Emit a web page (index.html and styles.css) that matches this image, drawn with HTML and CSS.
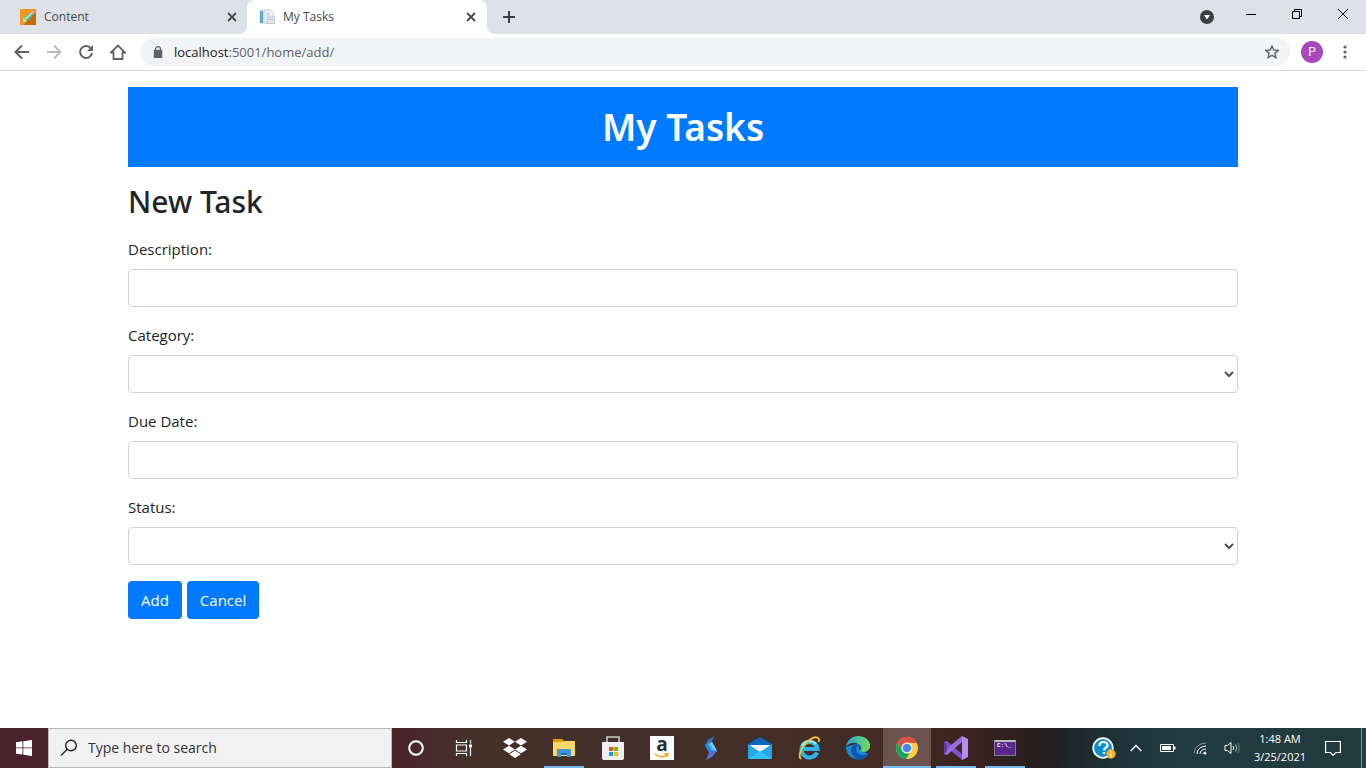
FILE: index.html
```html
<!DOCTYPE html>
<html lang="en">
<head>
<meta charset="utf-8">
<meta name="viewport" content="width=device-width, initial-scale=1">
<title>My Tasks</title>
<link rel="stylesheet" href="styles.css">
</head>
<body>
<div class="tab-strip">
  <div class="tab">
    <svg class="favicon" width="16" height="16" viewBox="0 0 16 16"><rect width="16" height="16" fill="#f7941d"/><path d="M16 3v13H3z" fill="#c46c00"/><path d="M2.500 13.500l1.300-4.200 7.400-6.500 2.300 2.400-7 7.200z" fill="#45bfa6"/><path d="M4.500 9.800l7-6.400 1 1-6.800 6.600z" fill="#a5f0df"/><path d="M11 3l1-1q2-.5 2.500 2l-1 1.300z" fill="#ef9bc8"/><path d="M2.500 13.500l1.200-4 2.800 2.800z" fill="#fce5b4"/></svg>
    <span class="tab-title">Content</span>
    <button class="tab-close" aria-label="Close Content"><svg width="10" height="10" viewBox="0 0 10 10"><path d="M1 1l8 8M9 1L1 9" stroke="#45494d" stroke-width="1.800"/></svg></button>
  </div>
  <div class="tab tab-active">
    <svg class="favicon" width="16" height="16" viewBox="0 0 16 16"><path d="M1 1h10v13H1z" fill="#e9eef3" stroke="#c6ced5" stroke-width=".7"/><path d="M1 2h3v12H1z" fill="#5fa6d8"/><path d="M5 1h6l3 3v10H5z" fill="#f5f7f9" stroke="#bcc5cc" stroke-width=".8"/><path d="M8 8h7.500v6.500H8z" fill="#e4e9ed" stroke="#b4bdc4" stroke-width=".8"/><path d="M9 10.500h5M7 4h4M7 6h4" stroke="#aeb9c2" stroke-width=".8"/></svg>
    <span class="tab-title">My Tasks</span>
    <button class="tab-close" aria-label="Close My Tasks"><svg width="10" height="10" viewBox="0 0 10 10"><path d="M1 1l8 8M9 1L1 9" stroke="#45494d" stroke-width="1.800"/></svg></button>
  </div>
  <button class="new-tab" aria-label="New tab"><svg width="12" height="12" viewBox="0 0 12 12"><path d="M6 0v12M0 6h12" stroke="#3c4043" stroke-width="2"/></svg></button>
  <div class="window-controls">
    <button class="tab-search" aria-label="Search tabs"><svg width="14" height="14" viewBox="0 0 14 14"><circle cx="7" cy="7" r="7" fill="#3c4043"/><path d="M4 5h6L7 9.500z" fill="#fff"/></svg></button>
    <button class="window-button" aria-label="Minimize"><svg width="10" height="10" viewBox="0 0 10 10"><path d="M0 5.500h10" stroke="#000"/></svg></button>
    <button class="window-button" aria-label="Restore"><svg width="10" height="10" viewBox="0 0 10 10"><path d="M.5 2.500h7v7h-7zM2.500 2.500v-2h7v7h-2" fill="none" stroke="#000"/></svg></button>
    <button class="window-button" aria-label="Close"><svg width="10" height="10" viewBox="0 0 10 10"><path d="M0 0l10 10M10 0L0 10" stroke="#000"/></svg></button>
  </div>
</div>
<div class="toolbar">
  <button class="nav-button" aria-label="Back"><svg width="16" height="16" viewBox="0 0 16 16"><path d="M15 8H2M8 1.500L1.500 8 8 14.500" fill="none" stroke="#5f6368" stroke-width="2"/></svg></button>
  <button class="nav-button" aria-label="Forward"><svg width="16" height="16" viewBox="0 0 16 16"><path d="M1 8h13M8 1.500L14.500 8 8 14.500" fill="none" stroke="#babcbe" stroke-width="2"/></svg></button>
  <button class="nav-button" aria-label="Reload"><svg width="16" height="16" viewBox="0 0 16 16"><path d="M13 4.500A6 6 0 1 0 14 9" fill="none" stroke="#5f6368" stroke-width="2"/><path d="M15 1v6H9z" fill="#5f6368"/></svg></button>
  <button class="nav-button" aria-label="Home"><svg width="16" height="16" viewBox="0 0 16 16"><path d="M1 8.500L8 1.500l7 7h-2.500V15h-9V8.500z" fill="none" stroke="#5f6368" stroke-width="1.800"/></svg></button>
  <div class="address-bar">
    <svg width="10" height="12" viewBox="0 0 10 12"><path d="M1 4h8v8H1z" fill="#5f6368" stroke="#5f6368" stroke-width=".5"/><path d="M2.500 5V3a2.500 2.300 0 0 1 5 0v2" fill="none" stroke="#5f6368" stroke-width="1.200"/></svg>
    <a class="address" href="#"><span class="address-host">localhost</span>:5001/home/add/</a>
    <button class="bookmark" aria-label="Bookmark this page"><svg width="14" height="14" viewBox="0 0 14 14"><path d="M7 1l1.800 4 4.400.4-3.300 2.900 1 4.300L7 10.300l-3.900 2.300 1-4.300L.8 5.400 5.200 5z" fill="none" stroke="#5f6368" stroke-width="1.400"/></svg></button>
  </div>
  <button class="profile">P</button>
  <button class="nav-button menu-button" aria-label="Menu"><svg width="4" height="14" viewBox="0 0 4 14" fill="#5f6368"><circle cx="2" cy="2" r="1.600"/><circle cx="2" cy="7" r="1.600"/><circle cx="2" cy="12" r="1.600"/></svg></button>
</div>
<main class="page">
  <header class="banner"><h1>My Tasks</h1></header>
  <h2>New Task</h2>
  <form>
    <div class="field"><label for="description">Description:</label><input class="control" id="description" type="text"></div>
    <div class="field"><label for="category">Category:</label><select class="control" id="category"><option></option></select></div>
    <div class="field"><label for="due">Due Date:</label><input class="control" id="due" type="text"></div>
    <div class="field"><label for="status">Status:</label><select class="control" id="status"><option></option></select></div>
    <div class="actions"><button class="btn" type="submit">Add</button><a class="btn" href="#">Cancel</a></div>
  </form>
</main>
<footer class="taskbar">
  <button class="task" aria-label="Start"><svg width="16" height="16" viewBox="0 0 16 16" fill="#fff"><path d="M0 2.200l6.500-.9v6.200H0zM7.300 1.200L16 0v7.500H7.300zM0 8.300h6.500v6.300L0 13.700zM7.300 8.300H16V16l-8.700-1.200z"/></svg></button>
  <div class="search">
    <svg width="18" height="18" viewBox="0 0 18 18"><circle cx="11" cy="6.500" r="5.300" fill="none" stroke="#222" stroke-width="1.400"/><path d="M7.200 10.300L1 16.500" stroke="#222" stroke-width="1.400"/></svg>
    <input type="text" aria-label="Search" placeholder="Type here to search">
  </div>
  <button class="task" aria-label="Cortana"><svg width="16" height="16" viewBox="0 0 16 16"><circle cx="8" cy="8" r="6.800" fill="none" stroke="#fff" stroke-width="2"/></svg></button>
  <button class="task" aria-label="Task view"><svg width="18" height="16" viewBox="0 0 18 16"><path d="M1.500 0v2.500h10V0M1.500 16v-2.500h10V16M1.500 5h10v6h-10zM15.500 0v3.500M15.500 8v8" fill="none" stroke="#fff" stroke-width="1.200"/><path d="M14 4.500h3v3h-3z" fill="#fff"/></svg></button>
  <div class="apps">
    <button class="task" aria-label="Dropbox"><svg width="24" height="20" viewBox="0 0 24 20" fill="#fff"><path d="M6 0l6 3.800-6 3.800-6-3.800zM18 0l6 3.800-6 3.800-6-3.800zM6 7.700l6 3.800-6 3.800-6-3.800zM18 7.700l6 3.800-6 3.800-6-3.800zM12 12.600l5.700 3.700L12 20l-5.700-3.700z"/></svg></button>
    <button class="task task-open" aria-label="File Explorer"><svg width="22" height="18" viewBox="0 0 22 18"><path d="M0 0h9l2 2h11v15H0z" fill="#e0990c"/><path d="M0 3h9l2-1h11v15H0z" fill="#ffd766"/><path d="M4 10h14v8h-4v-4H8v4H4z" fill="#3b96db"/><path d="M8 14h6v2H8z" fill="#236ab0"/></svg></button>
    <button class="task" aria-label="Store"><svg width="24" height="24" viewBox="0 0 24 24"><path d="M6 7V1h12v6" fill="none" stroke="#ccc" stroke-width="1.600"/><path d="M1 6h22v16q0 2-2 2H3q-2 0-2-2z" fill="#f1f1f1"/><path d="M8 11h4v4H8z" fill="#f04e23"/><path d="M13 11h4v4h-4z" fill="#7fba00"/><path d="M8 16h4v4H8z" fill="#00a4ef"/><path d="M13 16h4v4h-4z" fill="#ffb900"/></svg></button>
    <button class="task" aria-label="Amazon"><span class="amazon">a<svg width="14" height="5" viewBox="0 0 14 5"><path d="M0 1q6 5 12 1M9.500 1l3.500-.3-1 3" fill="none" stroke="#ff9900" stroke-width="1.300"/></svg></span></button>
    <button class="task" aria-label="Streams"><svg width="14" height="24" viewBox="0 0 14 24"><path d="M11 0L4 4 1 10l3 1 3-5z" fill="#2b78dc"/><path d="M1 9l7-3 5 9-7 3z" fill="#42b5f5"/><path d="M6 7l2-1 5 9-2 1z" fill="#6dd3fa"/><path d="M1 9l3-1 5 9-3 1z" fill="#2686e8"/><path d="M10 14l3 1-5 6-6 3 3-7z" fill="#5871d4"/></svg></button>
    <button class="task" aria-label="Mail"><svg width="24" height="22" viewBox="0 0 24 22"><path d="M12 0l12 7v5H0V7z" fill="#0b66bd"/><path d="M2 8h20v10H2z" fill="#f4f5f8"/><path d="M0 7l12 8 12-8v15H0z" fill="#25a6e9"/><path d="M0 22l12-8 12 8z" fill="#36c1f5"/></svg></button>
    <button class="task" aria-label="Internet Explorer"><svg width="24" height="24" viewBox="0 0 24 24"><path d="M20 16.500A8 7.800 0 1 1 20.500 13H7" fill="none" stroke="#2cb5ee" stroke-width="4.200"/><path d="M5 10a8 7 0 0 1 14-2" fill="none" stroke="#a5eafe" stroke-width="2"/><path d="M4 23C-2 18 13-1 20 1.500q3 1 1.500 4.500" fill="none" stroke="#f9c51d" stroke-width="1.800"/></svg></button>
    <button class="task" aria-label="Edge"><svg width="24" height="24" viewBox="0 0 24 24"><defs><linearGradient id="edge-top"><stop stop-color="#20a6dc"/><stop offset="1" stop-color="#72dd5c"/></linearGradient></defs><path d="M0 11a12 12 0 0 0 22 7l-9-5V7z" fill="#168bd5"/><path d="M0 11C1 4 6 0 12 0c8 0 13 6 12 11-1 5-7 6-10 4 2-3 1-7-4-8Q4 6 0 11z" fill="url(#edge-top)"/><path d="M10 8c-5 1-6 6-4 10 2 5 7 7 11 5 3-1 4-3 5-5-5 3-12 0-12-5 0-2 1-3 3-4z" fill="#1255ae"/></svg></button>
    <button class="task task-open task-current" aria-label="Chrome"><svg width="24" height="24" viewBox="0 0 24 24"><circle cx="12" cy="12" r="11" fill="#ffcd40"/><path d="M2.500 6.500A11 11 0 0 1 22 7H12l-5 8z" fill="#de5246"/><path d="M2.500 6.500A11 11 0 0 0 11 23l5-8-9 0z" fill="#18a15f"/><circle cx="12" cy="12" r="5.500" fill="#fff"/><circle cx="12" cy="12" r="4.300" fill="#4688ef"/></svg></button>
    <button class="task task-open" aria-label="Visual Studio"><svg width="24" height="24" viewBox="0 0 24 24"><path d="M0 6l3-1 15 13v6L0 9z" fill="#8050c8"/><path d="M0 18l3 1L18 6V0L0 15z" fill="#9a6bdb"/><path d="M0 6l3 3v6l-3 3z" fill="#6237a4"/><path d="M18 0l6 3v18l-6 3z" fill="#b98af3"/></svg></button>
    <button class="task task-open" aria-label="Command Prompt"><span class="terminal">C:\_</span></button>
  </div>
  <div class="tray">
    <button class="tray-button" aria-label="Get help"><svg width="24" height="22" viewBox="0 0 24 22"><circle cx="11" cy="11" r="9.800" fill="#0d8fd0" stroke="#fff" stroke-width="1.700"/><path d="M7.500 9q0-4 4-4t4 3.500c0 2-3.500 2.500-3.500 5M12 15v2" fill="none" stroke="#fff" stroke-width="2.200"/><circle cx="19" cy="17" r="4.700" fill="#f8af22"/><path d="M19 14v1.500M19 16.500V20" stroke="#fff" stroke-width="1.200"/></svg></button>
    <button class="tray-button" aria-label="Show hidden icons"><svg width="12" height="8" viewBox="0 0 12 8"><path d="M.7 7L6 1.500 11.300 7" fill="none" stroke="#fff" stroke-width="1.300"/></svg></button>
    <button class="tray-button" aria-label="Battery"><svg width="16" height="10" viewBox="0 0 16 10"><path d="M.5 1.500h13v7H.5z" fill="none" stroke="#fff"/><path d="M2 3h9v4H2zM14 3.500h1.500v3H14z" fill="#fff"/></svg></button>
    <button class="tray-button" aria-label="Wi-Fi"><svg width="14" height="14" viewBox="0 0 14 14" fill="none" stroke="#fff"><path d="M1 12Q2 3 13 2" stroke="#8a9697"/><path d="M4 13Q4 6 13 5M7 13Q7 8.500 13 8"/><path d="M10 13q0-2 3-2"/><circle cx="12.300" cy="12.500" r=".8" fill="#fff"/></svg></button>
    <button class="tray-button" aria-label="Volume"><svg width="17" height="14" viewBox="0 0 17 14" fill="none" stroke="#fff"><path d="M1 4.500h2.500L7 1.500v11L3.500 9.500H1z"/><path d="M9 5q1.500 2 0 4"/><path d="M11.500 3.500q2.500 3.500 0 7" stroke="#b5bdbd"/><path d="M14 2q3 5 0 10" stroke="#6f7d7f"/></svg></button>
    <time class="clock" datetime="2021-03-25T01:48"><span>1:48 AM</span><span>3/25/2021</span></time>
    <button class="tray-button notifications" aria-label="Notifications"><svg width="16" height="16" viewBox="0 0 16 16"><path d="M.6 1.500h14.800v11H11L8 15.300l-2.500-2.800H.6z" fill="none" stroke="#fff" stroke-width="1.200"/></svg></button>
  </div>
</footer>
</body>
</html>
```
FILE: styles.css
```css
* { box-sizing: border-box; }
body {
  margin: 0;
  min-height: 100vh;
  display: flex;
  flex-direction: column;
  background: #fff;
  color: #212529;
  font: 15px/24px "Open Sans", "Noto Sans", sans-serif;
}
button { padding: 0; border: 0; background: none; font: inherit; color: inherit; }
svg { display: block; flex: none; }
button svg { margin: 0 auto; }

.tab-strip { display: flex; height: 34px; background: #dee1e6; }
.tab {
  display: flex;
  align-items: center;
  width: 247px;
  padding: 0 10px 0 20px;
  font-size: 12px;
  line-height: 16px;
  color: #45494d;
}
.tab-active {
  position: relative;
  width: 240px;
  padding: 0 11px 0 12px;
  border-radius: 8px 8px 0 0;
  background: #fff;
}
.tab-active::before, .tab-active::after {
  content: "";
  position: absolute;
  bottom: 0;
  width: 8px;
  height: 8px;
}
.tab-active::before { right: 100%; background: radial-gradient(circle at 0 0, #dee1e6 8px, #fff 8px); }
.tab-active::after { left: 100%; background: radial-gradient(circle at 100% 0, #dee1e6 8px, #fff 8px); }
.tab-title { flex: 1; margin-left: 8px; }
.new-tab { width: 20px; margin-left: 12px; }
.window-controls { display: flex; align-items: flex-start; margin-left: auto; }
.tab-search { width: 42px; height: 34px; }
.window-button { width: 46px; height: 28px; }

.toolbar {
  display: flex;
  align-items: center;
  height: 37px;
  padding: 0 9px 0 6px;
  border-bottom: 1px solid #dadce0;
}
.nav-button { width: 32px; height: 32px; }
.address-bar {
  display: flex;
  flex: 1;
  align-items: center;
  height: 28px;
  margin-left: 6px;
  padding: 0 11px 0 13px;
  border-radius: 14px;
  background: #f1f3f4;
}
.address { flex: 1; margin-left: 11px; font-size: 13px; color: #5f6368; text-decoration: none; }
.address-host { color: #202124; }
.profile {
  width: 22px;
  height: 22px;
  margin-left: 11px;
  border-radius: 50%;
  background: #ab47bc;
  color: #fff;
  font: 12px/22px Roboto, sans-serif;
}
.menu-button { width: 24px; margin-left: 10px; }

.page { flex: 1; width: 100%; max-width: 1142px; margin: 0 auto; padding: 16px; }
.banner { padding: 16px; background: #007bff; color: #fff; text-align: center; }
h1, h2 { margin: 0; font-family: "Noto Sans", sans-serif; font-weight: 500; }
h1 { font-size: 37px; line-height: 48px; font-weight: 600; }
h2 { margin: 16px 0; font-size: 30px; line-height: 38px; }
.field { margin-bottom: 16px; }
.field label { display: block; width: fit-content; margin-bottom: 8px; }
.control {
  display: block;
  width: 100%;
  height: 38px;
  padding: 6px 12px;
  border: 1px solid #ced4da;
  border-radius: 4px;
  background: #fff;
  color: #495057;
  font: inherit;
}
select.control { padding: 6px 0; }
.actions { display: flex; gap: 5px; }
.btn {
  padding: 7px 13px;
  border-radius: 4px;
  background: #007bff;
  color: #fff;
  text-decoration: none;
}

.taskbar {
  display: flex;
  height: 40px;
  background: linear-gradient(90deg, #4a212d 0, #4a212d 28%, #46302a 34%, #43302a 45%, #442b25 64%, #3b231f 71%, #211f20 77%, #1e3137 81%, #203a40 86%, #243b3d 100%);
  color: #fff;
}
.task { width: 48px; flex: none; }
.search {
  display: flex;
  align-items: center;
  flex: 0 1 344px;
  padding-left: 11px;
  border: 1px solid #bbb;
  background: #f1f1f1;
}
.search input {
  flex: 1;
  min-width: 0;
  margin-left: 10px;
  padding: 0;
  border: 0;
  background: none;
  font: 14px/20px "Open Sans", sans-serif;
}
.search input::placeholder { color: #333; }
.apps { display: flex; gap: 1px; margin-left: 3px; }
.task-open {
  background: linear-gradient(#76b9ed, #76b9ed) center bottom / 40px 2px no-repeat;
}
.task-current {
  background: linear-gradient(#76b9ed, #76b9ed) center bottom / 48px 2px no-repeat #6b5350;
}
.amazon {
  display: flex;
  flex-direction: column;
  align-items: center;
  width: 24px;
  height: 24px;
  margin: 0 auto;
  background: #fff;
  color: #232f3e;
  font: bold 19px/17px "Open Sans", sans-serif;
}
.terminal {
  display: block;
  width: 22px;
  height: 16px;
  margin: 0 auto;
  padding-left: 2px;
  border: 1px solid #807b86;
  border-top: 2px solid #bbb;
  background: #58288f;
  font: bold 6px/8px "Liberation Mono", monospace;
  text-align: left;
}
.tray { display: flex; align-items: center; margin-left: auto; padding-right: 4px; }
.tray-button { width: 32px; height: 40px; }
.clock {
  display: flex;
  flex-direction: column;
  width: 64px;
  text-align: center;
  font-size: 11px;
  line-height: 18px;
}
.notifications { width: 50px; padding-right: 7px; border-right: 1px solid #8b9697; }
```
